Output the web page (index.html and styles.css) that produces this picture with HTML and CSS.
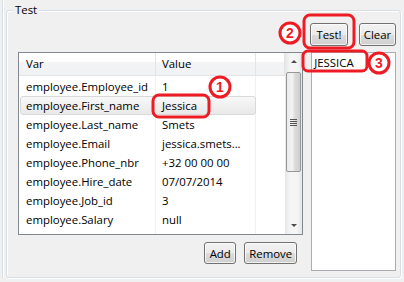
FILE: index.html
```html
<!DOCTYPE html>
<html lang="en">
<head>
    <meta charset="UTF-8">
    <title>Test</title>
    <link rel="stylesheet" href="styles.css">
</head>
<body>

<div class="frame">
    <div class="group">
        <span class="group-title">Test</span>

        <div class="toolbar">
            <button class="btn btn-test">Test!</button>
            <button class="btn btn-clear">Clear</button>
        </div>

        <div class="main">
            <div class="left">
                <div class="table">
                    <div class="grid">
                        <div class="head">
                            <span class="c1">Var</span>
                            <span class="c2">Value</span>
                            <span class="c3"></span>
                        </div>
                        <div class="rows">
                            <div class="row"><div class="cells"><span class="c1">employee.Employee_id</span><span class="c2">1</span></div></div>
                            <div class="row selected"><div class="cells"><span class="c1">employee.First_name</span><span class="c2">Jessica</span></div></div>
                            <div class="row"><div class="cells"><span class="c1">employee.Last_name</span><span class="c2">Smets</span></div></div>
                            <div class="row"><div class="cells"><span class="c1">employee.Email</span><span class="c2">jessica.smets...</span></div></div>
                            <div class="row"><div class="cells"><span class="c1">employee.Phone_nbr</span><span class="c2">+32 00 00 00</span></div></div>
                            <div class="row"><div class="cells"><span class="c1">employee.Hire_date</span><span class="c2">07/07/2014</span></div></div>
                            <div class="row"><div class="cells"><span class="c1">employee.Job_id</span><span class="c2">3</span></div></div>
                            <div class="row"><div class="cells"><span class="c1">employee.Salary</span><span class="c2">null</span></div></div>
                        </div>
                    </div>
                    <div class="scrollbar">
                        <div class="arrow up"></div>
                        <div class="track">
                            <div class="thumb"><span class="grip"></span></div>
                        </div>
                        <div class="arrow down"></div>
                    </div>
                </div>
                <div class="actions">
                    <button class="btn btn-add">Add</button>
                    <button class="btn btn-remove">Remove</button>
                </div>
            </div>
            <div class="output">JESSICA</div>
        </div>
    </div>

    <svg class="marks" width="404" height="282" viewBox="0 0 404 282">
        <rect x="153" y="95" width="56" height="22" rx="6" />
        <circle cx="220" cy="87" r="10" />
        <text x="220" y="92">1</text>

        <rect x="304" y="15" width="50" height="33" rx="6" />
        <circle cx="290" cy="33" r="10" />
        <text x="290" y="38">2</text>

        <rect x="303" y="51" width="64" height="20" rx="5" />
        <circle cx="379" cy="63" r="10" />
        <text x="379" y="68">3</text>
    </svg>
</div>

</body>
</html>
```

FILE: styles.css
```css
body {
    margin: 0;
    background: #f0f0f0;
    font-family: 'Open Sans', 'Liberation Sans', sans-serif;
    font-size: 11.4px;
    color: #000;
}
.frame {
    position: relative;
    width: 404px;
    height: 282px;
    box-sizing: border-box;
    padding: 10px 0 0 3px;
}
.frame::before {
    content: '';
    position: absolute;
    left: 2px;
    top: 0;
    bottom: 4px;
    border-left: 1px solid #d5dfe5;
    border-right: 1px solid #fff;
}
.group {
    position: relative;
    margin-left: 3px;
    width: 395px;
    height: 268px;
    box-sizing: border-box;
    border: 1px solid #d5dfe5;
    border-radius: 3px;
    box-shadow: inset 1px 1px 0 #fff, 1px 1px 0 #fff;
    padding: 12px 4px 0 11px;
}
.group-title {
    position: absolute;
    left: 6px;
    top: -9px;
    padding: 0 2px;
    background: #f0f0f0;
    line-height: 16px;
}
.toolbar {
    display: flex;
    justify-content: flex-end;
    gap: 11px;
}
.btn {
    height: 23px;
    padding: 0;
    border: 1px solid #707070;
    border-radius: 3px;
    background: linear-gradient(#f2f2f2 0%, #ebebeb 50%, #dddddd 51%, #cfcfcf 100%);
    box-shadow: inset 0 0 0 1px rgba(255, 255, 255, 0.7);
    font-family: inherit;
    font-size: 11.4px;
    color: #000;
}
.btn-test {
    width: 38px;
}
.btn-clear {
    width: 37px;
}
.main {
    display: flex;
    gap: 8px;
    margin-top: 6px;
}
.left {
    width: 286px;
}
.table {
    display: flex;
    height: 183px;
    box-sizing: border-box;
    border: 1px solid #828790;
    background: #fff;
}
.grid {
    flex: 1;
    background:
        linear-gradient(#eef0f3, #eef0f3) 136px 0 / 1px 100% no-repeat,
        linear-gradient(#eef0f3, #eef0f3) 236px 0 / 1px 100% no-repeat,
        #fff;
}
.head {
    display: flex;
    height: 23px;
    box-sizing: border-box;
    border-bottom: 1px solid #e5e5e5;
    background: linear-gradient(#ffffff 0%, #ffffff 40%, #f3f4f6 41%, #f1f2f4 100%);
    line-height: 22px;
}
.head span {
    box-sizing: border-box;
    border-right: 1px solid #e3e4e6;
}
.head .c1 {
    width: 137px;
    padding-left: 7px;
}
.head .c2 {
    width: 100px;
    padding-left: 6px;
}
.head .c3 {
    flex: 1;
}
.rows {
    padding-top: 1px;
}
.row {
    height: 19px;
    padding-left: 1px;
}
.cells {
    display: flex;
    width: 236px;
    height: 19px;
    box-sizing: border-box;
    border: 1px solid transparent;
    border-radius: 3px;
    line-height: 17px;
}
.row.selected .cells {
    border-color: #d9d9d9;
    background: linear-gradient(#f8f8f8, #e9e9e9);
}
.cells .c1 {
    width: 136px;
    padding-left: 5px;
    box-sizing: border-box;
    white-space: nowrap;
}
.cells .c2 {
    padding-left: 5px;
    white-space: nowrap;
}
.scrollbar {
    display: flex;
    flex-direction: column;
    width: 17px;
    background: linear-gradient(90deg, #e6e6e6, #f5f5f5 30%, #f5f5f5 70%, #e6e6e6);
}
.arrow {
    height: 17px;
    display: flex;
    align-items: center;
    justify-content: center;
}
.arrow::after {
    content: '';
    border-left: 3px solid transparent;
    border-right: 3px solid transparent;
}
.arrow.up::after {
    border-bottom: 3px solid #4d4d4d;
}
.arrow.down::after {
    border-top: 3px solid #4d4d4d;
}
.track {
    flex: 1;
    padding: 2px 1px 0 1px;
}
.thumb {
    height: 100px;
    box-sizing: border-box;
    border: 1px solid #979797;
    border-radius: 2px;
    background: linear-gradient(90deg, #e9e9e9, #f4f4f4 40%, #dcdcdc 60%, #cfcfcf);
    display: flex;
    align-items: center;
    justify-content: center;
}
.grip {
    width: 7px;
    height: 7px;
    background: repeating-linear-gradient(#555 0 1px, transparent 1px 2px);
}
.actions {
    display: flex;
    justify-content: flex-end;
    gap: 8px;
    margin-top: 7px;
    padding-right: 6px;
}
.btn-add {
    width: 32px;
    height: 22px;
}
.btn-remove {
    width: 53px;
    height: 22px;
}
.output {
    width: 85px;
    height: 219px;
    box-sizing: border-box;
    border: 1px solid #abadb3;
    background: #fff;
    padding: 1px 2px;
    line-height: 17px;
}
.marks {
    position: absolute;
    left: 0;
    top: 0;
    pointer-events: none;
}
.marks rect, .marks circle {
    fill: none;
    stroke: #ed1c24;
    stroke-width: 3;
}
.marks circle {
    fill: #fff;
}
.marks text {
    fill: #ed1c24;
    font-family: 'Liberation Sans', sans-serif;
    font-weight: bold;
    font-size: 14px;
    text-anchor: middle;
}
```
